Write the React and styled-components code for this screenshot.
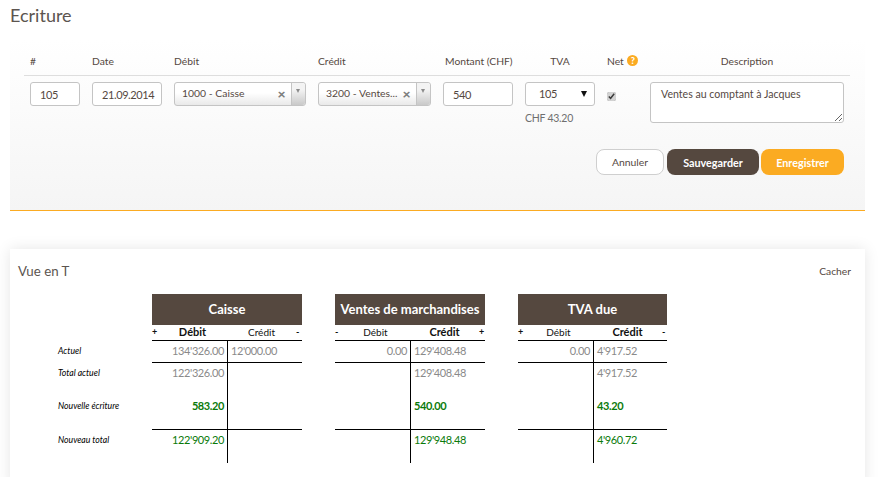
import React from 'react';
import styled, { createGlobalStyle } from 'styled-components';

const GlobalStyle = createGlobalStyle`
    html, body {
        margin: 0;
        padding: 0;
        background: #fff;
        overflow: hidden;
    }
    body {
        font-family: "Lato", "Liberation Sans", sans-serif;
        color: #55483f;
    }
`;

const ACCOUNTS = [
    {
        title: 'Caisse',
        left: '+',
        right: '-',
        bold: 'debit',
        rows: [
            ["134'326.00", "12'000.00"],
            ["122'326.00", ''],
            ['583.20', ''],
            ["122'909.20", ''],
        ],
    },
    {
        title: 'Ventes de marchandises',
        left: '-',
        right: '+',
        bold: 'credit',
        rows: [
            ['0.00', "129'408.48"],
            ['', "129'408.48"],
            ['', '540.00'],
            ['', "129'948.48"],
        ],
    },
    {
        title: 'TVA due',
        left: '+',
        right: '-',
        bold: 'credit',
        rows: [
            ['0.00', "4'917.52"],
            ['', "4'917.52"],
            ['', '43.20'],
            ['', "4'960.72"],
        ],
    },
];

const ROW_KINDS = ['current', 'total', 'entry', 'final'];
const ROW_LABELS = ['Actuel', 'Total actuel', 'Nouvelle écriture', 'Nouveau total'];

function Chosen({ label }) {
    return (
        <ChosenBox>
            <ChosenLabel>{label}</ChosenLabel>
            <ChosenClear>×</ChosenClear>
            <ChosenArrow />
        </ChosenBox>
    );
}

function Account({ account }) {
    return (
        <AccountBox>
            <AccountTitle>{account.title}</AccountTitle>
            <SideRow>
                <Sign>{account.left}</Sign>
                <SideName $strong={account.bold === 'debit'}>Débit</SideName>
                <SideName $strong={account.bold === 'credit'}>Crédit</SideName>
                <Sign>{account.right}</Sign>
            </SideRow>
            {account.rows.map((row, i) => (
                <AmountRow key={i} $kind={ROW_KINDS[i]}>
                    <DebitCell $kind={ROW_KINDS[i]}>{row[0]}</DebitCell>
                    <CreditCell $kind={ROW_KINDS[i]}>{row[1]}</CreditCell>
                </AmountRow>
            ))}
        </AccountBox>
    );
}

export default function App() {
    return (
        <Page>
            <GlobalStyle />
            <Title>Ecriture</Title>
            <EntryPanel>
                <EntryGrid>
                    <HeadCell>#</HeadCell>
                    <HeadCell>Date</HeadCell>
                    <HeadCell>Débit</HeadCell>
                    <HeadCell>Crédit</HeadCell>
                    <HeadCell $indent>Montant (CHF)</HeadCell>
                    <HeadCell $center>TVA</HeadCell>
                    <HeadCell>
                        Net <HelpBadge>?</HelpBadge>
                    </HeadCell>
                    <HeadCell $center>Description</HeadCell>
                </EntryGrid>
                <HeadRule />
                <EntryGrid>
                    <TextInput defaultValue="105" />
                    <TextInput defaultValue="21.09.2014" />
                    <Chosen label="1000 - Caisse" />
                    <Chosen label="3200 - Ventes..." />
                    <TextInput defaultValue="540" />
                    <div>
                        <VatSelect>
                            <span>105</span>
                        </VatSelect>
                        <VatAmount>CHF 43.20</VatAmount>
                    </div>
                    <NetCheck type="checkbox" defaultChecked />
                    <DescriptionArea defaultValue="Ventes au comptant à Jacques" />
                </EntryGrid>
                <Actions>
                    <CancelButton>Annuler</CancelButton>
                    <SaveButton>Sauvegarder</SaveButton>
                    <SubmitButton>Enregistrer</SubmitButton>
                </Actions>
            </EntryPanel>
            <TCard>
                <CardHead>
                    <CardTitle>Vue en T</CardTitle>
                    <HideLink>Cacher</HideLink>
                </CardHead>
                <TLayout>
                    <LabelColumn>
                        {ROW_LABELS.map((label, i) => (
                            <RowLabel key={label} $kind={ROW_KINDS[i]}>{label}</RowLabel>
                        ))}
                    </LabelColumn>
                    {ACCOUNTS.map((account) => (
                        <Account key={account.title} account={account} />
                    ))}
                </TLayout>
            </TCard>
        </Page>
    );
}

const Page = styled.div`
    height: 477px;
    overflow: hidden;
    padding: 0 18px 0 10px;
    box-sizing: border-box;
`;

const Title = styled.h1`
    margin: 0;
    padding-top: 4px;
    height: 40px;
    box-sizing: border-box;
    font-size: 18px;
    line-height: 22px;
    font-weight: 400;
    color: #5c5550;
`;

const EntryPanel = styled.section`
    height: 171px;
    box-sizing: border-box;
    padding: 14px 15px 0 14px;
    background: linear-gradient(#fff, #f5f5f5);
    border-bottom: 1px solid #fbab22;
`;

const EntryGrid = styled.div`
    display: grid;
    grid-template-columns: 50px 70px 132px 113px 70px 70px 31px 194px;
    column-gap: 12px;
    padding: 0 6px;
    align-items: start;
`;

const HeadCell = styled.div`
    height: 21px;
    font-size: 10.3px;
    line-height: 15px;
    color: #55483f;
    white-space: nowrap;
    text-align: ${(p) => (p.$center ? 'center' : 'left')};
    padding-left: ${(p) => (p.$indent ? '2px' : '0')};
`;

const HelpBadge = styled.span`
    display: inline-block;
    width: 11px;
    height: 11px;
    margin-left: 1px;
    border-radius: 50%;
    background: #fbab22;
    color: #fff;
    font-size: 9px;
    font-weight: 900;
    line-height: 11px;
    text-align: center;
    vertical-align: 1px;
`;

const HeadRule = styled.div`
    height: 1px;
    background: #dedede;
    margin-bottom: 6px;
`;

const TextInput = styled.input`
    width: 100%;
    height: 24px;
    box-sizing: border-box;
    padding: 0 0 0 9px;
    border: 1px solid #c4c4c4;
    border-radius: 3px;
    background: #fff;
    font-family: inherit;
    font-size: 11px;
    letter-spacing: -0.4px;
    color: #55483f;
    outline: none;
`;

const ChosenBox = styled.div`
    display: flex;
    align-items: center;
    height: 24px;
    box-sizing: border-box;
    padding-left: 7px;
    border: 1px solid #c4c4c4;
    border-radius: 3px;
    background: linear-gradient(#fff 45%, #e9e9e9);
    font-size: 10.4px;
    color: #55483f;
`;

const ChosenLabel = styled.span`
    flex: 1;
    min-width: 0;
    white-space: nowrap;
    margin-top: -3px;
`;

const ChosenClear = styled.span`
    flex: none;
    width: 19px;
    text-align: center;
    font-size: 14px;
    font-weight: 900;
    line-height: 12px;
    color: #7f7f7f;
`;

const ChosenArrow = styled.span`
    position: relative;
    flex: none;
    align-self: stretch;
    width: 13px;
    border-left: 1px solid #c4c4c4;
    border-radius: 0 3px 3px 0;
    background: linear-gradient(#f3f3f3 30%, #c9c9c9);

    &::after {
        content: '';
        position: absolute;
        top: 6px;
        left: 4px;
        border-left: 2.5px solid transparent;
        border-right: 2.5px solid transparent;
        border-top: 4px solid #8b8b8b;
    }
`;

const VatSelect = styled.div`
    position: relative;
    height: 24px;
    box-sizing: border-box;
    padding-left: 13px;
    border: 1px solid #c4c4c4;
    border-radius: 3px;
    background: #fff;
    font-size: 11px;
    letter-spacing: -0.4px;
    line-height: 21px;
    color: #55483f;

    &::after {
        content: '';
        position: absolute;
        top: 8px;
        right: 7px;
        border-left: 3px solid transparent;
        border-right: 3px solid transparent;
        border-top: 6px solid #111;
    }
`;

const VatAmount = styled.div`
    margin-top: 5px;
    font-size: 10.5px;
    letter-spacing: -0.25px;
    line-height: 14px;
    color: #6f6f6f;
    white-space: nowrap;
`;

const NetCheck = styled.input`
    width: 9px;
    height: 9px;
    margin: 10px 0 0;
    accent-color: #d2d2d2;
`;

const DescriptionArea = styled.textarea`
    display: block;
    width: 100%;
    height: 41px;
    box-sizing: border-box;
    padding: 4px 10px;
    border: 1px solid #c4c4c4;
    border-radius: 3px;
    background: #fff;
    font-family: inherit;
    font-size: 10.6px;
    line-height: 14px;
    color: #55483f;
    outline: none;
`;

const Actions = styled.div`
    display: flex;
    justify-content: flex-end;
    gap: 2px;
    margin-top: 24px;
    padding-right: 6px;
`;

const ActionButton = styled.button`
    height: 26px;
    box-sizing: border-box;
    padding: 0;
    border: none;
    border-radius: 8px;
    font-family: inherit;
    font-size: 10.8px;
    font-weight: 700;
`;

const CancelButton = styled(ActionButton)`
    width: 68px;
    margin-right: 1px;
    border: 1px solid #cfcfcf;
    background: #fff;
    color: #55483f;
    font-size: 10.4px;
    font-weight: 400;
`;

const SaveButton = styled(ActionButton)`
    width: 92px;
    background: #55483f;
    color: #fff;
`;

const SubmitButton = styled(ActionButton)`
    width: 83px;
    background: #fbab22;
    color: #fff;
`;

const TCard = styled.section`
    margin-top: 38px;
    height: 240px;
    padding: 0 14px 0 8px;
    background: #fff;
    box-shadow: 0 0 14px rgba(0, 0, 0, 0.1);
`;

const CardHead = styled.div`
    display: flex;
    justify-content: space-between;
    align-items: center;
    height: 45px;
    padding-bottom: 1px;
    box-sizing: border-box;
`;

const CardTitle = styled.h2`
    margin: 0;
    font-size: 13.3px;
    font-weight: 400;
    color: #5c5550;
`;

const HideLink = styled.span`
    font-size: 10.3px;
    color: #55483f;
`;

const TLayout = styled.div`
    display: flex;
    gap: 33px;
`;

const LabelColumn = styled.div`
    width: 61px;
    padding: 47px 0 0 40px;
`;

const rowHeight = (kind) => {
    if (kind === 'current') return '22px';
    if (kind === 'entry') return '34px';
    return '33px';
};

const RowLabel = styled.div`
    height: ${(p) => rowHeight(p.$kind)};
    font-size: 8.7px;
    font-style: italic;
    line-height: 19px;
    color: #000;
    white-space: nowrap;
`;

const AccountBox = styled.div`
    width: 150px;

    &:last-child {
        width: 149px;
    }
`;

const AccountTitle = styled.div`
    height: 31px;
    background: #55483f;
    color: #fff;
    font-size: 13px;
    font-weight: 700;
    line-height: 31px;
    text-align: center;
    white-space: nowrap;
`;

const SideRow = styled.div`
    display: grid;
    grid-template-columns: 6px 69px 69px 6px;
    height: 16px;
    box-sizing: border-box;
    border-bottom: 1px solid #000;
    color: #111;
    line-height: 14px;
`;

const Sign = styled.span`
    font-size: 9px;
    font-weight: 700;
`;

const SideName = styled.span`
    text-align: center;
    font-size: ${(p) => (p.$strong ? '11px' : '10px')};
    font-weight: ${(p) => (p.$strong ? 700 : 400)};
`;

const AmountRow = styled.div`
    display: grid;
    grid-template-columns: 76px 1fr;
    height: ${(p) => rowHeight(p.$kind)};
    box-sizing: border-box;
    border-bottom: ${(p) => (p.$kind === 'current' || p.$kind === 'entry' ? '1px solid #000' : 'none')};
`;

const amountColor = (kind) => (kind === 'entry' || kind === 'final' ? '#0a7a0a' : '#8a8a8a');

const DebitCell = styled.div`
    border-right: 1px solid #000;
    padding-right: 3px;
    text-align: right;
    font-size: 11px;
    letter-spacing: -0.4px;
    line-height: 20px;
    color: ${(p) => amountColor(p.$kind)};
    font-weight: ${(p) => (p.$kind === 'entry' ? 700 : 400)};
`;

const CreditCell = styled.div`
    padding-left: 3px;
    font-size: 11px;
    letter-spacing: -0.4px;
    line-height: 20px;
    color: ${(p) => amountColor(p.$kind)};
    font-weight: ${(p) => (p.$kind === 'entry' ? 700 : 400)};
`;
